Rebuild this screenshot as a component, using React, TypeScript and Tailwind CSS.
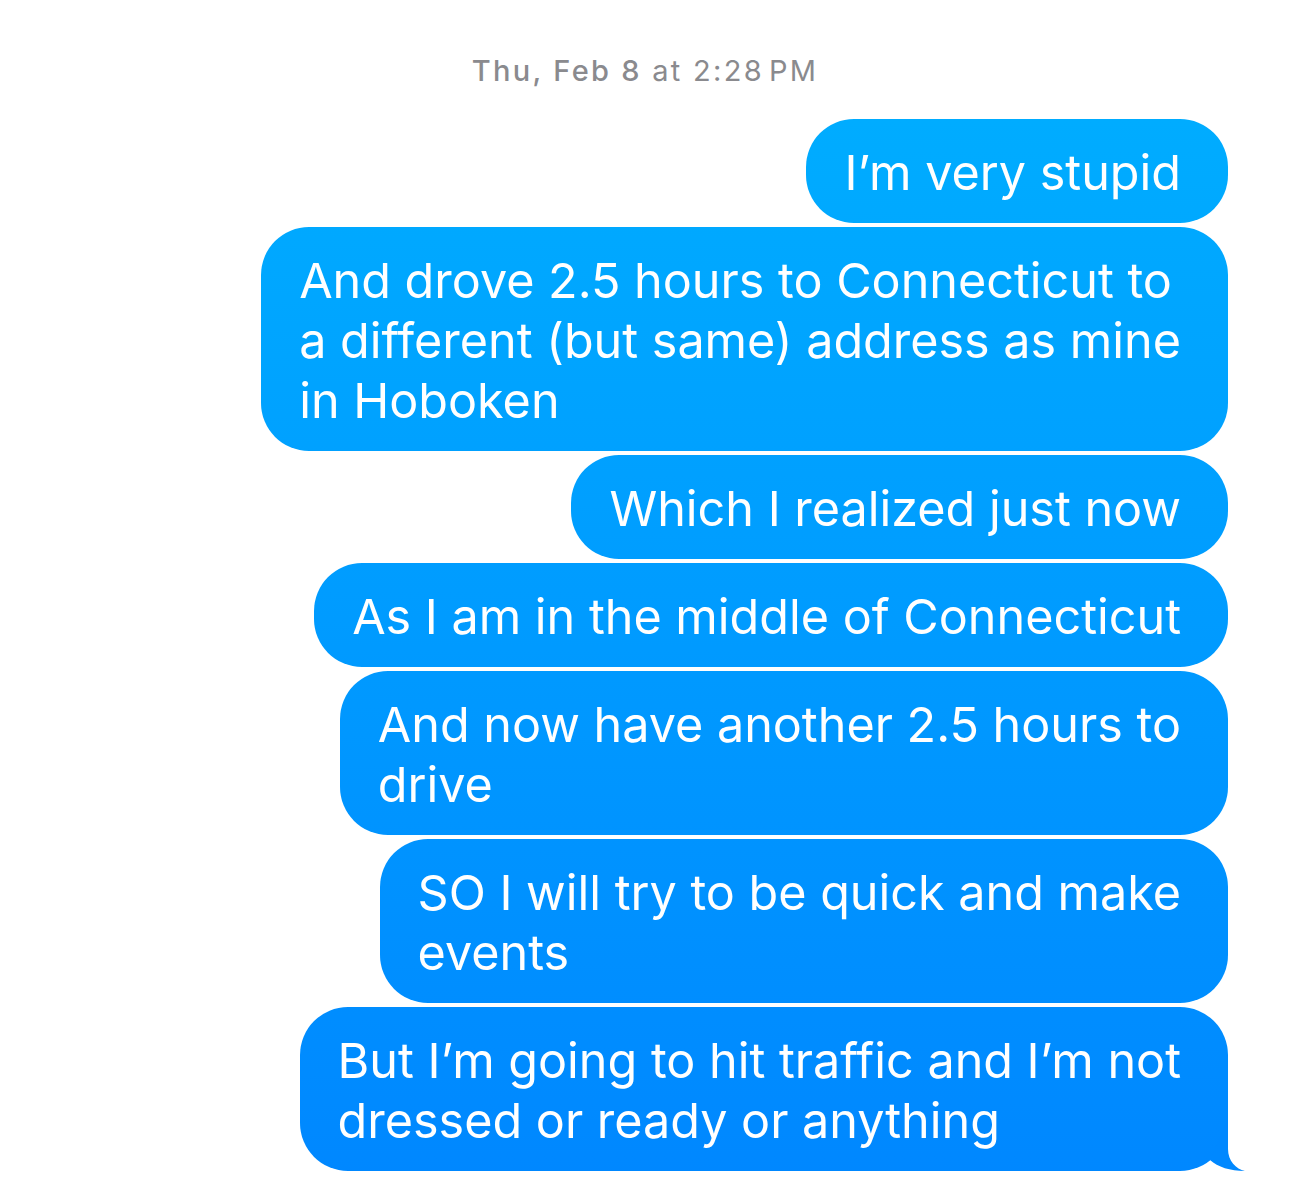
const messages: string[][] = [
  ["I\u2019m very stupid"],
  [
    "And drove 2.5 hours to Connecticut to",
    "a different (but same) address as mine",
    "in Hoboken",
  ],
  ["Which I realized just now"],
  ["As I am in the middle of Connecticut"],
  ["And now have another 2.5 hours to", "drive"],
  ["SO I will try to be quick and make", "events"],
  ["But I\u2019m going to hit traffic and I\u2019m not", "dressed or ready or anything"],
];

const Tail = () => (
  <svg
    className="absolute right-[-18px] bottom-0"
    width="40"
    height="55"
    viewBox="0 0 40 55"
  >
    <path
      d="M22 3 L22 33 C22 45 30 53 39 55 C24 55 12 51 4 44 Z"
      fill="#0088ff"
    />
  </svg>
);

const Bubble = ({ lines, last }: { lines: string[]; last?: boolean }) => (
  <div className="relative rounded-[48px] bg-fixed bg-linear-to-b from-[#00b0ff] to-[#0087ff] pt-[24px] pb-[20px] pl-[38px] pr-[47px] text-[48.5px] leading-[60px] text-white">
    {lines.map((line, i) => (
      <div key={i} className="whitespace-nowrap">
        {line}
      </div>
    ))}
    {last && <Tail />}
  </div>
);

export default function App() {
  return (
    <div
      className="w-full h-[1184px] bg-white pt-[55px]"
      style={{ fontFamily: "Inter, 'Noto Sans', sans-serif" }}
    >
      <div className="text-center text-[29px] leading-[32px] tracking-[2.3px] text-[#8a8a8e]">
        <span className="font-medium">Thu, Feb 8</span> at 2:28&#8202;PM
      </div>
      <div className="mt-[32px] flex flex-col items-end gap-[4px] pr-[62px]">
        {messages.map((m, i) => (
          <Bubble key={i} lines={m} last={i === messages.length - 1} />
        ))}
      </div>
    </div>
  );
}
